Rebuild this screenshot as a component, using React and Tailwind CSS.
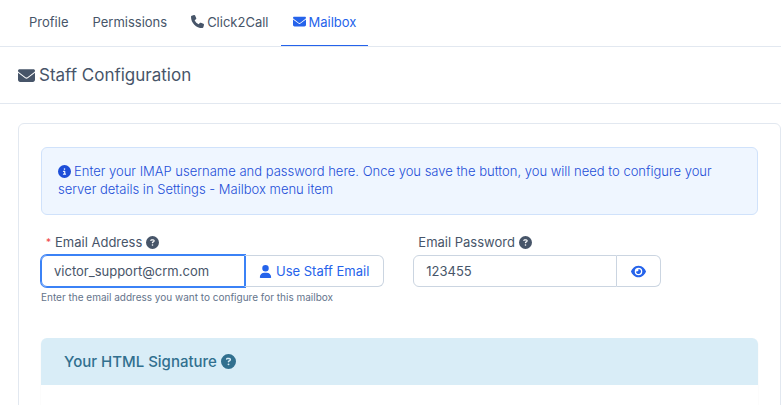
import { useState } from "react"
import {
  FaCircleInfo,
  FaCircleQuestion,
  FaEnvelope,
  FaEye,
  FaPhone,
  FaUser,
} from "react-icons/fa6"

const tabs = [
  { name: "Profile" },
  { name: "Permissions" },
  { name: "Click2Call", icon: FaPhone },
  { name: "Mailbox", icon: FaEnvelope },
]

function Tabs({ active, onChange }) {
  return (
    <nav className="flex h-[47px] border-b border-[#e2e8f0] px-[17px]">
      {tabs.map(({ name, icon: Icon }) => (
        <button
          key={name}
          type="button"
          onClick={() => onChange(name)}
          className={
            "flex items-center gap-[3px] border-b px-3 pb-[2px] " +
            (active === name
              ? "border-[#2563eb] text-[#2563eb]"
              : "border-transparent text-[#475569]")
          }
        >
          {Icon && <Icon />}
          {name}
        </button>
      ))}
    </nav>
  )
}

function App() {
  const [tab, setTab] = useState("Mailbox")
  const [email, setEmail] = useState("victor_support@crm.com")
  const [password, setPassword] = useState("123455")
  const [visible, setVisible] = useState(true)

  return (
    <div className="h-screen overflow-hidden bg-white font-['Inter',sans-serif] text-[13px] leading-[18px] text-[#475569]">
      <Tabs active={tab} onChange={setTab} />

      <header className="border-b border-[#e2e8f0] px-[18px] py-4">
        <h4 className="flex items-center gap-1 text-[17px] leading-6">
          <FaEnvelope />
          Staff Configuration
        </h4>
      </header>

      <main className="mt-[19px] ml-[18px] rounded-md border border-[#e2e8f0] px-[22px] pt-[23px] pb-6">
        <div className="rounded-md border border-[#d0e2fb] bg-[#eff6ff] px-4 pt-[14px] pb-4 font-light text-[#1d4ed8]">
          <FaCircleInfo className="mr-[3px] inline align-[-2px]" />
          Enter your IMAP username and password here. Once you save the button,
          you will need to configure your server details in Settings - Mailbox
          menu item
        </div>

        <form className="mt-[18px] flex gap-[29px]">
          <div>
            <label
              htmlFor="email"
              className="flex items-center gap-1 pl-[5px]"
            >
              <small className="text-[10px] leading-3 text-[#ef4444]">*</small>
              Email Address
              <FaCircleQuestion />
            </label>
            <div className="mt-1 flex h-8">
              <input
                id="email"
                type="text"
                value={email}
                onChange={(e) => setEmail(e.target.value)}
                className="w-[204px] rounded-l-md border border-[#3b82f6] px-3 ring-1 ring-[#3b82f6] outline-none"
              />
              <button
                type="button"
                className="flex items-center gap-1 rounded-r-md border border-l-0 border-[#cbd5e1] px-[14px] text-[#2563eb]"
              >
                <FaUser />
                Use Staff Email
              </button>
            </div>
            <p className="mt-1 text-[10px] leading-3 text-[#64748b]">
              Enter the email address you want to configure for this mailbox
            </p>
          </div>

          <div>
            <label
              htmlFor="password"
              className="flex items-center gap-1 pl-[5px]"
            >
              Email Password
              <FaCircleQuestion />
            </label>
            <div className="mt-1 flex h-8">
              <input
                id="password"
                type={visible ? "text" : "password"}
                value={password}
                onChange={(e) => setPassword(e.target.value)}
                className="w-[204px] rounded-l-md border border-[#cbd5e1] px-3 outline-none"
              />
              <button
                type="button"
                aria-label="Toggle password"
                onClick={() => setVisible(!visible)}
                className="rounded-r-md border border-l-0 border-[#cbd5e1] px-[14px] text-[#2563eb]"
              >
                <FaEye className="text-[15px]" />
              </button>
            </div>
          </div>
        </form>

        <section className="mt-[35px] rounded-md shadow-xs">
          <h5 className="flex items-center gap-1 rounded-t-md bg-[#d9edf7] px-[23px] py-3 text-[15px] leading-[23px] font-medium text-[#31708f]">
            Your HTML Signature
            <FaCircleQuestion />
          </h5>
          <div className="h-40" />
        </section>
      </main>
    </div>
  )
}

export default App
